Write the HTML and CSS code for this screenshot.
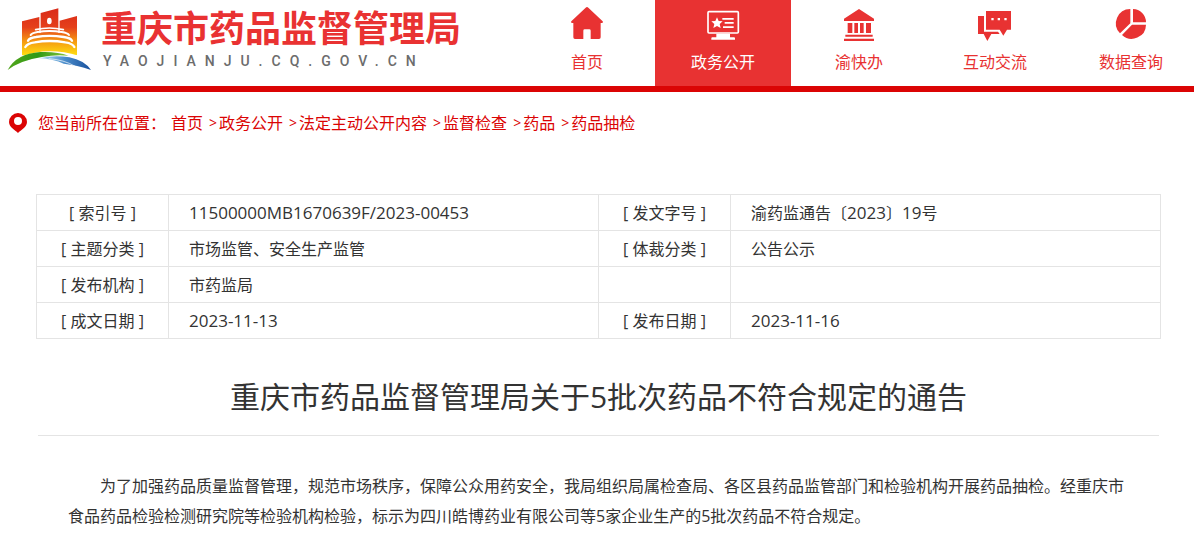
FILE: index.html
```html
<!DOCTYPE html>
<html lang="zh-CN">
<head>
  <meta charset="UTF-8">
  <meta name="viewport" content="width=device-width, initial-scale=1.0">
  <title>重庆市药品监督管理局关于5批次药品不符合规定的通告</title>
  <link rel="stylesheet" href="styles.css">
</head>
<body>
  <header class="header">
    <a class="logo" href="#">
      <svg class="logo-mark" viewBox="20 20 255 192" aria-hidden="true">
        <defs>
          <linearGradient id="tower" gradientUnits="userSpaceOnUse" x1="0" y1="25" x2="0" y2="165">
            <stop offset="0" stop-color="#d92a18"/>
            <stop offset="0.4" stop-color="#e5401b"/>
            <stop offset="0.7" stop-color="#f59a12"/>
            <stop offset="1" stop-color="#ffdf10"/>
          </linearGradient>
          <linearGradient id="hill" x1="0" x2="1">
            <stop offset="0" stop-color="#52a51c"/>
            <stop offset="0.5" stop-color="#2f9a16"/>
            <stop offset="1" stop-color="#8cc63c"/>
          </linearGradient>
          <linearGradient id="river" x1="0" x2="1">
            <stop offset="0" stop-color="#b5e0f5"/>
            <stop offset="0.5" stop-color="#4a8cca"/>
            <stop offset="1" stop-color="#174f9c"/>
          </linearGradient>
        </defs>
        <path fill="url(#tower)" d="M65 63 L117 50 V98 H121 V38 L174 24 V98 H178 V61 L230 47 V165 H65 Z"/>
        <ellipse cx="147" cy="62" rx="7" ry="10" fill="#fff"/>
        <g fill="none" stroke="#fff" stroke-linecap="round">
          <path stroke-width="5" d="M106 88 Q147 78 189 88"/>
          <path stroke-width="6" d="M91 104 Q94 98 112 95 Q147 89 184 95 Q202 98 206 104"/>
          <path stroke-width="7" d="M83 121 Q87 113 107 110 Q147 103 190 110 Q211 113 215 121"/>
          <path stroke-width="7" d="M75 140 Q81 129 103 126 Q147 118 195 126 Q217 129 222 140"/>
        </g>
        <path fill="#fff" d="M60 170 Q140 138 235 166 V178 H60 Z"/>
        <path fill="url(#hill)" d="M22 209 Q48 160 120 155 Q170 153 205 166 Q165 162 125 170 Q60 180 22 209 Z"/>
        <path fill="url(#river)" d="M116 174 Q160 164 207 171 Q252 180 272 209 Q230 194 190 190 Q160 176 116 174 Z"/>
        <path fill="none" stroke="#fff" stroke-width="2" d="M145 175 Q190 178 225 198"/>
      </svg>
      <span class="logo-text">
        <strong class="logo-name">重庆市药品监督管理局</strong>
        <span class="logo-domain">YAOJIANJU.CQ.GOV.CN</span>
      </span>
    </a>
    <nav class="nav">
      <a class="nav-item" href="#">
        <svg class="nav-icon" viewBox="0 0 108 108" aria-hidden="true">
          <path d="M50 5 Q54 1 58 5 L101 46 Q104 51 98 51 H95 V94 Q95 99 90 99 H65 V74 Q65 70 61 70 H47 Q43 70 43 74 V99 H18 Q13 99 13 94 V51 H10 Q4 51 7 46 Z"/>
        </svg>
        <span>首页</span>
      </a>
      <a class="nav-item active" href="#">
        <svg class="nav-icon" viewBox="0 0 108 108" aria-hidden="true">
          <rect x="9" y="17" width="91" height="64" rx="3" fill="none" stroke="currentColor" stroke-width="5"/>
          <path d="M36 34 L41 45 L53 46 L44 54 L47 66 L36 60 L25 66 L28 54 L19 46 L31 45 Z"/>
          <path d="M52 36 H86 V41 H52 Z M59 48 H86 V53 H59 Z M54 61 H86 V66 H54 Z M34 83 H75 V94 H87 Q90 94 90 97 V101 H19 V97 Q19 94 22 94 H34 Z"/>
        </svg>
        <span>政务公开</span>
      </a>
      <a class="nav-item" href="#">
        <svg class="nav-icon" viewBox="0 0 108 108" aria-hidden="true">
          <path d="M54 9 L99 38 V45 H9 V38 Z M20 51 H34 V81 H20 Z M40 51 H51 V81 H40 Z M57 51 H68 V81 H57 Z M75 51 H90 V81 H75 Z M13 86 H95 V92 H13 Z M9 98 H99 V105 H9 Z"/>
        </svg>
        <span>渝快办</span>
      </a>
      <a class="nav-item" href="#">
        <svg class="nav-icon" viewBox="0 0 108 108" aria-hidden="true">
          <path d="M3 30 H21 V77 H63 L68 84 H43 L31 105 L20 84 H3 Z"/>
          <path fill-rule="evenodd" d="M27 15 H102 V71 H90 L79 89 L68 71 H27 Z M43 36 V43 H50 V36 Z M62 36 V43 H69 V36 Z M82 36 V43 H89 V36 Z"/>
        </svg>
        <span>互动交流</span>
      </a>
      <a class="nav-item" href="#">
        <svg class="nav-icon" viewBox="0 0 108 108" aria-hidden="true">
          <path d="M60 9 A40 40 0 0 1 99 49 H60 Z M52 9 V52 L21 82 A43 43 0 0 1 52 9 Z M57 56 H99 A43 43 0 0 1 27 87 Z"/>
        </svg>
        <span>数据查询</span>
      </a>
    </nav>
  </header>

  <nav class="breadcrumb">
    <svg class="pin" viewBox="0 0 18 20" aria-hidden="true">
      <path fill-rule="evenodd" d="M9 0 A9 9 0 0 1 18 9 C18 14 12 17 9 20 C6 17 0 14 0 9 A9 9 0 0 1 9 0 Z M9 4 A4 4 0 1 0 9 12 A4 4 0 1 0 9 4 Z"/>
    </svg>
    <span class="breadcrumb-label">您当前所在位置：</span>
    <a href="#">首页</a><span class="sep">&gt;</span>
    <a href="#">政务公开</a><span class="sep">&gt;</span>
    <a href="#">法定主动公开内容</a><span class="sep">&gt;</span>
    <a href="#">监督检查</a><span class="sep">&gt;</span>
    <a href="#">药品</a><span class="sep">&gt;</span>
    <a href="#">药品抽检</a>
  </nav>

  <main class="content">
    <table class="info-table">
      <tr>
        <th scope="row">[ 索引号 ]</th>
        <td><span class="num">11500000MB1670639F/2023-00453</span></td>
        <th scope="row">[ 发文字号 ]</th>
        <td>渝药监通告〔<span class="num">2023</span>〕<span class="num">19</span>号</td>
      </tr>
      <tr>
        <th scope="row">[ 主题分类 ]</th>
        <td>市场监管、安全生产监管</td>
        <th scope="row">[ 体裁分类 ]</th>
        <td>公告公示</td>
      </tr>
      <tr>
        <th scope="row">[ 发布机构 ]</th>
        <td>市药监局</td>
        <th></th>
        <td></td>
      </tr>
      <tr>
        <th scope="row">[ 成文日期 ]</th>
        <td><span class="num">2023-11-13</span></td>
        <th scope="row">[ 发布日期 ]</th>
        <td><span class="num">2023-11-16</span></td>
      </tr>
    </table>

    <article class="article">
      <h1 class="article-title">重庆市药品监督管理局关于5批次药品不符合规定的通告</h1>
      <p class="article-text">为了加强药品质量监督管理，规范市场秩序，保障公众用药安全，我局组织局属检查局、各区县药品监管部门和检验机构开展药品抽检。经重庆市食品药品检验检测研究院等检验机构检验，标示为四川皓博药业有限公司等5家企业生产的5批次药品不符合规定。</p>
    </article>
  </main>
</body>
</html>
```
FILE: styles.css
```css
* {
  box-sizing: border-box;
}

body {
  margin: 0;
  font-family: "Open Sans", "Noto Sans CJK SC", sans-serif;
  font-size: 16px;
  line-height: 24px;
  color: #333;
  background: #fff;
}

a {
  color: inherit;
  text-decoration: none;
}

/* header */
.header {
  display: flex;
  height: 92px;
  border-bottom: 6px solid #db0404;
  overflow: hidden;
}

.logo {
  display: flex;
  flex: 0 0 519px;
  gap: 9px;
  padding: 7px 0 0 7px;
}

.logo-mark {
  width: 85px;
  height: 64px;
}

.logo-text {
  display: flex;
  flex-direction: column;
}

.logo-name {
  font-size: 36px;
  line-height: 44px;
  color: #e93232;
}

.logo-domain {
  padding-left: 2px;
  font-family: Roboto, Arial, sans-serif;
  font-size: 14px;
  font-weight: 500;
  line-height: 20px;
  letter-spacing: 9px;
  color: #6c6c6c;
}

.nav {
  display: flex;
}

.nav-item {
  display: flex;
  flex: 0 0 136px;
  flex-direction: column;
  align-items: center;
  gap: 8px;
  padding-top: 6px;
  color: #e83232;
}

.nav-item.active {
  color: #fff;
  background: #e83232;
}

.nav-icon {
  width: 36px;
  height: 36px;
  fill: currentColor;
}

/* breadcrumb */
.breadcrumb {
  display: flex;
  align-items: center;
  padding: 19px 9px;
  color: #db0404;
}

.pin {
  width: 18px;
  height: 20px;
  margin-right: 11px;
  fill: #db0404;
}

.breadcrumb-label {
  margin-right: 5px;
}

.sep {
  padding: 0 2px 0 6px;
  font-size: 14px;
}

/* document info */
.content {
  padding: 40px 33px 0 36px;
}

.info-table {
  width: 100%;
  table-layout: fixed;
  border-collapse: collapse;
}

.info-table th,
.info-table td {
  height: 36px;
  padding: 0 20px;
  border: 1px solid #e4e4e4;
  font-weight: normal;
  text-align: left;
}

.info-table th {
  width: 132px;
  padding: 0;
  text-align: center;
}

.num {
  font-size: 17px;
}

/* article */
.article {
  padding: 0 2px;
}

.article-title {
  margin: 0;
  padding: 36px 0 16px;
  border-bottom: 1px solid #e4e4e4;
  font-size: 30px;
  font-weight: normal;
  line-height: 44px;
  text-align: center;
}

.article-text {
  margin: 35px 30px 0;
  line-height: 30px;
  text-indent: 2em;
}
```
